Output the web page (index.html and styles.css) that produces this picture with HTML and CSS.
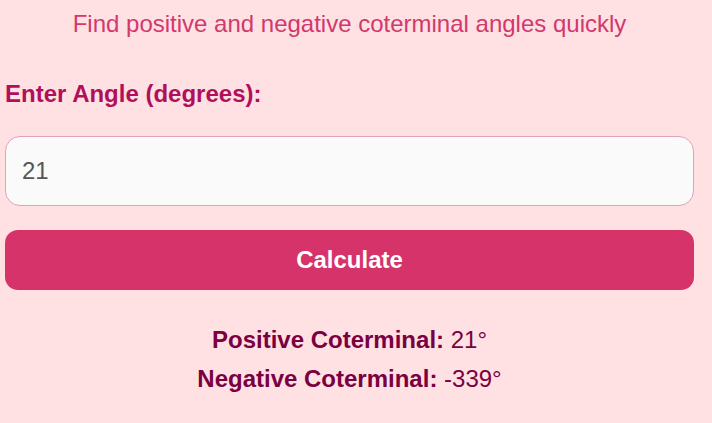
FILE: index.html
```html
<!DOCTYPE html>
<html lang="en">
<head>
<meta charset="utf-8">
<title>Coterminal Angle Calculator</title>
<link rel="stylesheet" href="styles.css">
</head>
<body>
  <main class="calc">
    <p class="subtitle">Find positive and negative coterminal angles quickly</p>
    <label class="field-label" for="angle">Enter Angle (degrees):</label>
    <input class="angle-input" id="angle" type="text" value="21">
    <button class="calc-btn" type="button">Calculate</button>
    <div class="results">
      <p class="result-line"><strong>Positive Coterminal:</strong> 21°</p>
      <p class="result-line"><strong>Negative Coterminal:</strong> -339°</p>
    </div>
  </main>
</body>
</html>
```

FILE: styles.css
```css
html, body {
  margin: 0;
  background: #ffe1e4;
}

body {
  font-family: "Liberation Sans", Arial, sans-serif;
}

.calc {
  width: 689px;
  margin-left: 5px;
  display: flex;
  flex-direction: column;
}

.subtitle {
  margin: 10px 0 0;
  text-align: center;
  font-size: 24px;
  line-height: 28px;
  color: #d2386c;
}

.field-label {
  margin-top: 42px;
  font-size: 24px;
  line-height: 28px;
  font-weight: bold;
  color: #b0105a;
}

.angle-input {
  margin-top: 28px;
  box-sizing: border-box;
  height: 70px;
  padding: 0 16px;
  border: 1px solid #dfa3b8;
  border-radius: 15px;
  background: #fafafa;
  font-family: inherit;
  font-size: 24px;
  color: #555;
  outline: none;
}

.calc-btn {
  margin-top: 24px;
  height: 60px;
  border: none;
  border-radius: 13px;
  background: #d6336a;
  color: #fff;
  font-family: inherit;
  font-size: 24px;
  font-weight: bold;
}

.results {
  margin-top: 36px;
  text-align: center;
  color: #7a0040;
  font-size: 24px;
}

.result-line {
  margin: 0 0 11px;
  line-height: 28px;
}
```
